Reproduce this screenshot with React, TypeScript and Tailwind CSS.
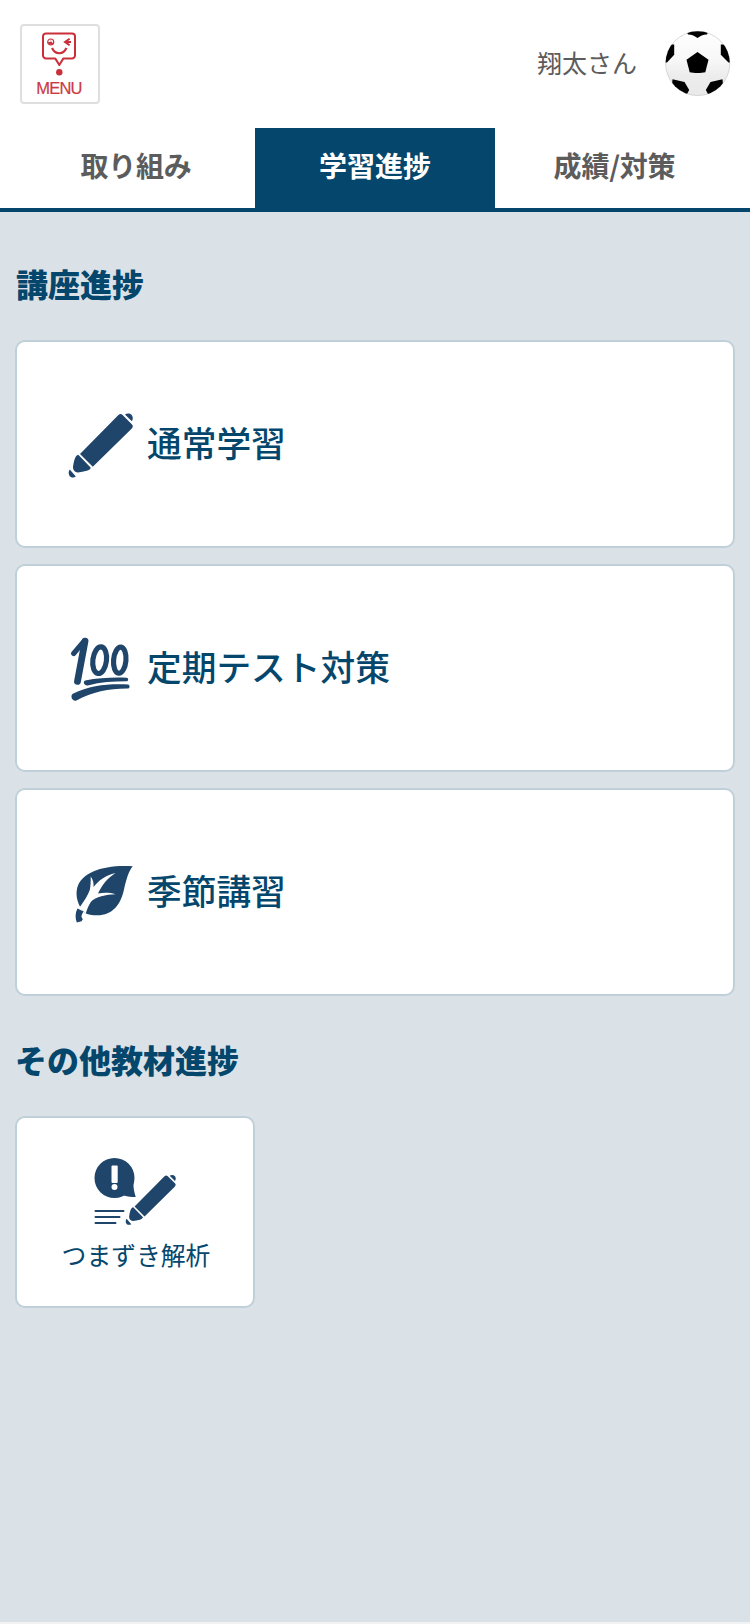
import type { ReactNode } from "react";

function MenuFaceIcon() {
  return (
    <svg width="36" height="44" viewBox="0 0 36 44" fill="none" stroke="#c9303a" strokeWidth="2" className="mr-0.5 shrink-0">
      <path
        d="M5 1.400h26a3 3 0 0 1 3 3v19a3 3 0 0 1-3 3h-8.600l-4.100 6.600-4.100-6.600H5a3 3 0 0 1-3-3v-19a3 3 0 0 1 3-3z"
        strokeLinejoin="round"
      />
      <circle cx="9.700" cy="10" r="3" strokeWidth="1.200" />
      <path d="M9.700 7v3h-2.800a3 3 0 0 0 5.400 1.200l-1.800-1.200z" fill="#c9303a" stroke="none" />
      <path d="M24 10h6M28.600 6.800L24 10l4.600 3.200" strokeWidth="2" />
      <path d="M11 16c3.500 7 11 7 14.500 0" strokeWidth="2.200" />
      <circle cx="18.300" cy="40.300" r="3.200" fill="#c9303a" stroke="none" />
    </svg>
  );
}

function SoccerBall() {
  return (
    <svg width="66" height="66" viewBox="0 0 66 66" className="shrink-0">
      <defs>
        <linearGradient id="ball" x1="0" y1="0" x2="0" y2="1">
          <stop offset="0" stopColor="#ffffff" />
          <stop offset="0.450" stopColor="#f7f7f7" />
          <stop offset="0.700" stopColor="#ececec" />
          <stop offset="1" stopColor="#e9e9e9" />
        </linearGradient>
        <clipPath id="ballEdge">
          <circle cx="32.700" cy="33.500" r="32.200" />
        </clipPath>
      </defs>
      <circle cx="32.700" cy="33.500" r="32.100" fill="url(#ball)" stroke="#c0c0c0" strokeWidth="0.600" />
      <g clipPath="url(#ballEdge)" fill="#000">
        <path d="M32.500 22l11 7.800-3.200 12.400c-4 1-11.600 1-15.600 0L21.500 29.800z" />
        <path d="M21 0h23l-2 4.500c-4 .2-7 1.600-9.500 3.600-2.500-2-5.500-3.400-9.500-3.600z" />
        <path d="M0 14.500h9.200v10.200L2 32.500H0z" />
        <path d="M66 14.500h-10.200v10.200l7.700 7.800H66z" />
        <path d="M7.500 49.200l12 2.900 4.700 7.800-2.200 4L14 66H6z" />
        <path d="M57.500 49.200l-12 2.900-4.700 7.800 2.200 4L51 66h8z" />
      </g>
    </svg>
  );
}

function PenShape() {
  return (
    <>
      <path d="M50.400 2q2.200-2 4.200 0l9.200 9.200q2 2 0 4.200L24.800 53.800 12 41z" />
      <path d="M10.300 41.800L22.800 54.800c-.4 1.600-2.200 2.500-4 3-3 .9-6 1.300-8.800 1.600-2.800.2-5.200-2.600-5-5.400.4-3 .9-6 2.200-9.200.7-1.500 1.600-2.700 3.100-3z" />
      <path d="M1.800 56.500l6 7c-1.600 1.400-4.500 1.200-6-.3-1.500-1.600-1.500-5.200 0-6.700z" />
      <path d="M57 1.500c1.800-1.500 5-1.300 6.500.2s1.800 4.700.3 6.500z" />
    </>
  );
}

function PenIcon() {
  return (
    <svg width="66" height="66" viewBox="0 0 66 66" fill="#1f456b">
      <PenShape />
    </svg>
  );
}

function HundredIcon() {
  return (
    <svg width="66" height="66" viewBox="0.300 1.500 64 64" fill="none" stroke="#1f456b" strokeLinecap="round" strokeLinejoin="round">
      <path d="M5.800 17.500L15.500 6" strokeWidth="5" />
      <path d="M16.800 5.500L9.500 44.500" strokeWidth="6.600" />
      <ellipse cx="31" cy="24" rx="6.600" ry="13" strokeWidth="5" transform="rotate(7 31 24)" />
      <ellipse cx="50.500" cy="24" rx="6" ry="12.700" strokeWidth="5" transform="rotate(5 50.500 24)" />
      <g fill="#1f456b" stroke="none">
        <path d="M17 43.800c13-2.800 27-3.200 40-2.800 2.200.2 2.200 3.300 0 3.500-13 .1-25 .8-37.500 4-3.800.5-5-3.900-2.500-4.700z" />
        <path d="M5 56.500c17-8.200 34-9.700 53.500-8.900 1.900.2 2 3.700.2 3.900C41 51.300 24 54.700 8.500 63 4.500 64.500 2 58.500 5 56.500z" />
      </g>
    </svg>
  );
}

function LeafIcon() {
  return (
    <svg width="66" height="66" viewBox="0 0 66 66">
      <path
        d="M64.800 5.300C60.800 10 58.800 17 56.300 27 53.300 43 45 54.300 29 54.300c-5 0-9-.8-12.500-2.600C10 45 7 35 9.300 26.500 14 11 36 3.500 64.800 5.300z"
        fill="#1f456b"
      />
      <path
        d="M11.500 46.500c4-5.500 8-11.500 10.300-17.500.8-4 1-8 .9-13.500 2.400 3.300 3.200 6.500 2.800 10.500 5-6.500 12-11.500 22-14-7.500 4.800-13.700 12-17.500 20.600 6-1.300 11.500-1.200 17.500.6-9.500.2-20 2.500-24.500 7.500-2.400 3.500-3.800 7.300-5.400 12z"
        fill="#fff"
      />
      <path d="M9.500 47.500l6 3c-1.200 2-2.200 4-2 5.500l1.300 2.200-1.300 2-4.700 1.300C7 57 7.200 51.500 9.500 47.500z" fill="#1f456b" />
    </svg>
  );
}

function StumbleIcon() {
  return (
    <svg width="84" height="70" viewBox="0 0 84 70" fill="#1f456b" className="ml-0.5 shrink-0">
      <path d="M20.500 1a20 20 0 1 1 0 40 20 20 0 0 1 0-40z" />
      <path d="M39.500 24c-.4 5 .4 10 2.200 16-4-.1-8-.3-11.700-1.500z" />
      <rect x="17.500" y="8.500" width="6.200" height="17.500" rx="1" fill="#fff" />
      <circle cx="20.500" cy="30" r="3" fill="#fff" />
      <path d="M1.500 54h28M1.500 60h24M1.500 66h20" stroke="#1f456b" strokeWidth="2" strokeLinecap="round" />
      <g transform="translate(31.200 17.600) scale(0.780)">
        <PenShape />
      </g>
    </svg>
  );
}

const tabs = [
  { label: "取り組み", active: false },
  { label: "学習進捗", active: true },
  { label: "成績/対策", active: false },
];

const courses: { label: string; icon: ReactNode }[] = [
  { label: "通常学習", icon: <PenIcon /> },
  { label: "定期テスト対策", icon: <HundredIcon /> },
  { label: "季節講習", icon: <LeafIcon /> },
];

export default function App() {
  return (
    <div className="flex h-[1624px] w-[750px] flex-col border-b-2 border-[#f1f2f4] bg-[#dae2e8] font-['Noto_Sans_CJK_JP',sans-serif] text-[#05476c]">
      <header className="flex h-32 items-start justify-between bg-white pt-6 pr-[19px] pl-5 text-[#5c5c5c]">
        <button className="flex h-20 w-20 flex-col items-center rounded border-2 border-[#dfdfdf] pt-1.5">
          <MenuFaceIcon />
          <span className="mt-1 mr-0.5 font-['Liberation_Sans',sans-serif] text-[16.5px] leading-4 tracking-[-0.8px] text-[#cb3942] [-webkit-text-stroke:0.2px]">
            MENU
          </span>
        </button>
        <div className="flex items-center gap-7 pt-1.5">
          <span className="pb-0.5 text-[25px] leading-9">翔太さん</span>
          <SoccerBall />
        </div>
      </header>

      <nav className="flex h-[84px] shrink-0 border-b-4 border-[#05476c] bg-white px-[15px]">
        {tabs.map((tab) => (
          <button
            key={tab.label}
            className={
              tab.active
                ? "h-20 w-60 bg-[#05476c] pb-[7px] text-[28px] font-bold text-white"
                : "h-20 w-60 pb-[7px] text-[28px] font-bold tracking-[-0.2px] text-[#5c5c5c] first:pl-0.5 last:pr-px"
            }
          >
            {tab.label}
          </button>
        ))}
      </nav>

      <main className="px-[15px]">
        <h2 className="mt-[47px] pl-px text-[32px] leading-[48px] font-black">講座進捗</h2>
        <div className="mt-[33px] flex flex-col gap-4">
          {courses.map((course) => (
            <a
              key={course.label}
              className="flex h-52 items-center gap-[13px] rounded-[10px] border-2 border-[#bfd0d9] bg-white pt-[3px] pl-[51px]"
            >
              {course.icon}
              <span className="pb-[7px] text-[34.7px] leading-[52px] font-medium">{course.label}</span>
            </a>
          ))}
        </div>

        <h2 className="mt-[39px] text-[32px] leading-[48px] font-black">その他教材進捗</h2>
        <a className="mt-[33px] flex h-48 w-60 flex-col items-center rounded-[10px] border-2 border-[#bfd0d9] bg-white pt-[39px]">
          <StumbleIcon />
          <span className="mt-[9px] ml-0.5 text-[24.8px] leading-9">つまずき解析</span>
        </a>
      </main>
    </div>
  );
}
